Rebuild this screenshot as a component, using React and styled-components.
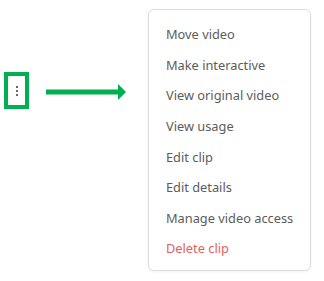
import React from "react";
import styled, { createGlobalStyle } from "styled-components";

const GlobalStyle = createGlobalStyle`
  body {
    margin: 0;
    background: #ffffff;
    font-family: "Noto Sans", "Open Sans", Arial, sans-serif;
  }
`;

const items = [
  "Move video",
  "Make interactive",
  "View original video",
  "View usage",
  "Edit clip",
  "Edit details",
  "Manage video access",
];

const App = () => {
  return (
    <Page>
      <GlobalStyle />
      <Trigger>
        <KebabBox>
          <Dot />
          <Dot />
          <Dot />
        </KebabBox>
        <Arrow width="80" height="16" viewBox="0 0 80 16">
          <rect x="0" y="5.5" width="74" height="5" fill="#00b050" />
          <polygon points="72,0 80,8 72,16" fill="#00b050" />
        </Arrow>
      </Trigger>
      <Menu>
        {items.map((label) => (
          <MenuItem key={label}>{label}</MenuItem>
        ))}
        <MenuItem $danger>Delete clip</MenuItem>
      </Menu>
    </Page>
  );
};

const Page = styled.div`
  display: flex;
  align-items: flex-start;
  padding: 9px 0 0 4px;
  width: 324px;
  height: 281px;
  box-sizing: border-box;
`;

const Trigger = styled.div`
  display: flex;
  align-items: center;
  margin-top: 63px;
`;

const KebabBox = styled.div`
  width: 25px;
  height: 37px;
  box-sizing: border-box;
  border: 4px solid #00b050;
  display: flex;
  flex-direction: column;
  align-items: center;
  justify-content: center;
  gap: 2px;
`;

const Dot = styled.span`
  width: 2px;
  height: 2px;
  border-radius: 50%;
  background: #333;
`;

const Arrow = styled.svg`
  display: block;
  margin-left: 17px;
  margin-top: 3px;
`;

const Menu = styled.div`
  margin-left: 22px;
  width: 163px;
  height: 262px;
  box-sizing: border-box;
  border: 1px solid #dcdcdc;
  border-radius: 6px;
  padding: 9px 0 7px;
  box-shadow: 0 1px 3px rgba(0, 0, 0, 0.06);
  background: #fff;
`;

const MenuItem = styled.div`
  height: 30.6px;
  display: flex;
  align-items: center;
  padding-left: 17px;
  font-size: 12.8px;
  color: ${(p) => (p.$danger ? "#e46060" : "#5c5c5c")};
  white-space: nowrap;
`;

export default App;
